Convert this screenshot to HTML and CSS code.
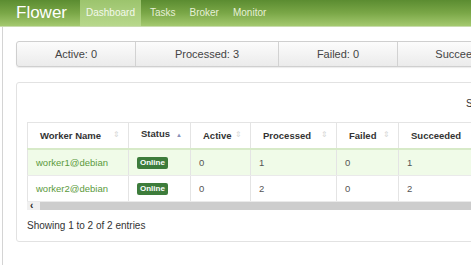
FILE: index.html
```html
<!DOCTYPE html>
<html lang="en">
<head>
  <meta charset="UTF-8">
  <title>Flower</title>
  <link rel="stylesheet" href="styles.css">
</head>
<body>
  <!-- Top navigation -->
  <div class="navbar">
    <span class="brand">Flower</span>
    <a href="#" class="nav-link active">Dashboard</a>
    <a href="#" class="nav-link">Tasks</a>
    <a href="#" class="nav-link">Broker</a>
    <a href="#" class="nav-link">Monitor</a>
  </div>

  <div class="page">
    <!-- Counters -->
    <div class="stats">
      <div class="stat w1">Active: 0</div>
      <div class="stat w2">Processed: 3</div>
      <div class="stat w1">Failed: 0</div>
      <div class="stat w2">Succeeded: 3</div>
      <div class="stat w1">Retried: 0</div>
    </div>

    <!-- Workers table -->
    <div class="panel">
      <div class="search">Search: <input type="text"></div>
      <table class="workers">
        <thead>
          <tr>
            <th class="c-name">Worker Name <span class="sort">&#8661;</span></th>
            <th class="c-status">Status <span class="sort up">&#9650;</span></th>
            <th class="c-active">Active <span class="sort">&#8661;</span></th>
            <th class="c-proc">Processed <span class="sort">&#8661;</span></th>
            <th class="c-failed">Failed <span class="sort">&#8661;</span></th>
            <th class="c-succ">Succeeded <span class="sort">&#8661;</span></th>
            <th>Retried <span class="sort">&#8661;</span></th>
            <th>Load Average <span class="sort">&#8661;</span></th>
          </tr>
        </thead>
        <tbody>
          <tr class="odd">
            <td><a href="#">worker1@debian</a></td>
            <td><span class="badge">Online</span></td>
            <td>0</td>
            <td>1</td>
            <td>0</td>
            <td>1</td>
            <td>0</td>
            <td>0.0, 0.01, 0.05</td>
          </tr>
          <tr>
            <td><a href="#">worker2@debian</a></td>
            <td><span class="badge">Online</span></td>
            <td>0</td>
            <td>2</td>
            <td>0</td>
            <td>2</td>
            <td>0</td>
            <td>0.0, 0.01, 0.05</td>
          </tr>
        </tbody>
      </table>
      <div class="hscroll"><span class="hscroll-btn">&#8249;</span></div>
      <div class="info">Showing 1 to 2 of 2 entries</div>
    </div>
  </div>
</body>
</html>
```

FILE: styles.css
```css
* {
  margin: 0;
  padding: 0;
  box-sizing: border-box;
}

body {
  font-family: 'Liberation Sans', Arial, sans-serif;
  background-color: #fff;
  color: #333;
  overflow: hidden;
  width: 1000px;
}

/* Navbar */
.navbar {
  display: flex;
  align-items: stretch;
  height: 27px;
  padding-left: 16px;
  background: linear-gradient(to bottom, #5b8c31 0%, #7aa747 50%, #a4c96f 100%);
  border-bottom: 1px solid #c9dcae;
}

.brand {
  color: #fff;
  font-size: 17px;
  line-height: 26px;
  margin-right: 13px;
}

.nav-link {
  color: #e6f0d8;
  text-decoration: none;
  font-size: 10px;
  line-height: 26px;
  padding: 0 7px;
}

.nav-link.active {
  background: linear-gradient(to bottom, #9cc46d 0%, #b8d88c 100%);
  color: #f4f9ec;
  padding: 0 6px;
  margin-right: 2px;
}

/* Page */
.page {
  margin-left: 2px;
  border-left: 1px solid #d4d4d4;
  padding: 14px 0 30px 13px;
}

.stats {
  display: flex;
  height: 26px;
  border: 1px solid #cfcfcf;
  border-radius: 3px;
  background: linear-gradient(to bottom, #fcfcfc 0%, #ebebeb 100%);
  box-shadow: 0 1px 1px rgba(0, 0, 0, 0.08);
}

.stat {
  font-size: 11px;
  line-height: 24px;
  text-align: center;
  color: #444;
  border-right: 1px solid #d2d2d2;
}

.stat.w1 { width: 119px; }
.stat.w2 { width: 143px; }

.panel {
  margin-top: 15px;
  border: 1px solid #e2e2e2;
  border-radius: 3px;
  padding: 0 0 0 10px;
  height: 160px;
  width: 900px;
}

.search {
  font-size: 10px;
  padding-top: 15px;
  padding-left: 439px;
  height: 39px;
  white-space: nowrap;
}

.search input {
  display: none;
}

/* Table */
.workers {
  border-collapse: collapse;
  font-size: 9.5px;
}

.workers th {
  text-align: left;
  font-weight: bold;
  color: #333;
  height: 26px;
  padding: 0 8px 0 12px;
  border: 1px solid #e4e4e4;
  border-bottom: 2px solid #d7eac8;
  white-space: nowrap;
}

.workers th.c-name { width: 101px; }
.workers th.c-status { width: 62px; }
.workers th.c-active { width: 60px; }
.workers th.c-proc { width: 86px; }
.workers th.c-failed { width: 62px; }
.workers th.c-succ { width: 90px; }

.sort {
  float: right;
  color: #d6d6d6;
  font-size: 8px;
  font-weight: normal;
}

.sort.up {
  color: #8890b8;
  font-size: 6px;
  line-height: 14px;
}

.workers td {
  height: 26px;
  padding: 0 8px;
  border-left: 1px solid #e4e4e4;
  border-right: 1px solid #e4e4e4;
  border-bottom: 1px solid #eaeaea;
  color: #555;
  white-space: nowrap;
}

.workers tr.odd td {
  background-color: #f0fbe8;
  height: 27px;
}

.workers td a {
  color: #5b9a3c;
  text-decoration: none;
  font-size: 9.5px;
}

.badge {
  display: inline-block;
  background-color: #3d7c3b;
  color: #fff;
  font-size: 8px;
  font-weight: bold;
  padding: 1px 3px;
  border-radius: 2px;
  line-height: 10px;
}

.hscroll {
  height: 8px;
  width: 880px;
  background-color: #cdcdcd;
  display: flex;
}

.hscroll-btn {
  width: 13px;
  background-color: #f0f0f0;
  font-size: 10px;
  font-weight: bold;
  line-height: 8px;
  padding-left: 3px;
  color: #222;
}

.info {
  font-size: 10px;
  padding-top: 10px;
  color: #333;
}
```
